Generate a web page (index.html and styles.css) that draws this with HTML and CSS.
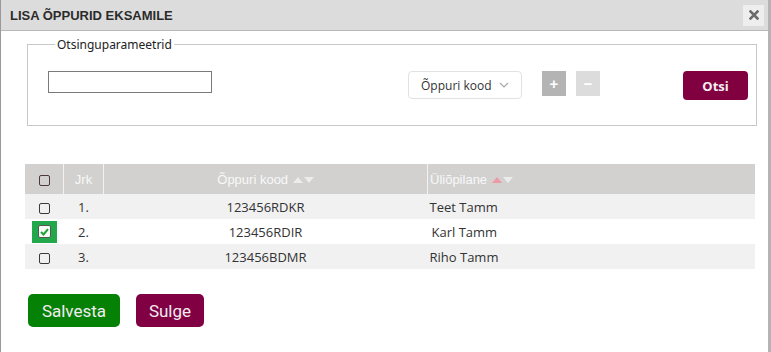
FILE: index.html
```html
<!DOCTYPE html>
<html lang="et">
<head>
    <meta charset="utf-8">
    <title>Lisa õppurid eksamile</title>
    <link rel="stylesheet" href="styles.css">
</head>
<body>
    <div class="dialog" role="dialog" aria-labelledby="dialogTitle">
        <div class="titlebar">
            <h1 id="dialogTitle" class="title">LISA ÕPPURID EKSAMILE</h1>
            <button class="close-btn" aria-label="Sulge">
                <svg width="10" height="10" viewBox="0 0 10 10" aria-hidden="true">
                    <path d="M1.5 1.5 L8.5 8.5 M8.5 1.5 L1.5 8.5" stroke="#6b6b6b" stroke-width="2.6" stroke-linecap="square"/>
                </svg>
            </button>
        </div>

        <div class="content">
            <fieldset class="search">
                <legend>Otsinguparameetrid</legend>
                <div class="search-row">
                    <input type="text" class="search-input" aria-label="Otsingu väärtus">
                    <div class="select-box">
                        <span>Õppuri kood</span>
                        <svg width="10" height="6" viewBox="0 0 10 6" aria-hidden="true">
                            <path d="M1 1 L5 5 L9 1" fill="none" stroke="#a8a8a8" stroke-width="1.2"/>
                        </svg>
                    </div>
                    <button class="param-btn param-add" aria-label="Lisa parameeter">+</button>
                    <button class="param-btn param-remove" aria-label="Eemalda parameeter">&minus;</button>
                    <button class="btn-search">Otsi</button>
                </div>
            </fieldset>

            <table class="grid">
                <thead>
                    <tr>
                        <th class="col-check"><span class="checkbox"></span></th>
                        <th class="col-nr">Jrk</th>
                        <th class="col-code">Õppuri kood <span class="sort"><i class="up"></i><i class="down"></i></span></th>
                        <th class="col-name">Üliõpilane <span class="sort"><i class="up active"></i><i class="down"></i></span></th>
                    </tr>
                </thead>
                <tbody>
                    <tr>
                        <td class="col-check"><span class="checkbox"></span></td>
                        <td class="col-nr">1.</td>
                        <td class="col-code">123456RDKR</td>
                        <td class="col-name">Teet Tamm</td>
                    </tr>
                    <tr>
                        <td class="col-check"><span class="check-wrap"><span class="checkbox checked">
                            <svg width="9" height="8" viewBox="0 0 9 8" aria-hidden="true">
                                <path d="M1 4 L3.5 6.5 L8 1.2" fill="none" stroke="#1f9e3a" stroke-width="2"/>
                            </svg>
                        </span></span></td>
                        <td class="col-nr">2.</td>
                        <td class="col-code">123456RDIR</td>
                        <td class="col-name name-shift">Karl Tamm</td>
                    </tr>
                    <tr>
                        <td class="col-check"><span class="checkbox"></span></td>
                        <td class="col-nr">3.</td>
                        <td class="col-code">123456BDMR</td>
                        <td class="col-name">Riho Tamm</td>
                    </tr>
                </tbody>
            </table>

            <div class="actions">
                <button class="btn-save">Salvesta</button>
                <button class="btn-close">Sulge</button>
            </div>
        </div>
    </div>
</body>
</html>
```

FILE: styles.css
```css
body {
    margin: 0;
    padding: 0;
    width: 771px;
    height: 352px;
    overflow: hidden;
    background: #fff;
    font-family: "Open Sans", "Noto Sans", sans-serif;
    color: #333;
}
.dialog {
    height: 352px;
    border-left: 1px solid #9a9a9a;
    border-right: 3px solid #b4b4b4;
    box-sizing: border-box;
}
.titlebar {
    display: flex;
    align-items: center;
    justify-content: space-between;
    height: 30px;
    padding: 0 4px 0 9px;
    background: #dcdcdc;
    border-bottom: 1px solid #b9b9b9;
}
.title {
    margin: 0;
    font-family: "Liberation Sans", Arial, sans-serif;
    font-size: 13px;
    font-weight: bold;
    color: #2b2b2b;
}
.close-btn {
    width: 21px;
    height: 21px;
    padding: 0;
    border: none;
    background: #eeeeee;
    display: flex;
    align-items: center;
    justify-content: center;
    cursor: pointer;
}
.content {
    padding: 0 11px 0 24px;
}
.search {
    margin: 5px 0 0 2px;
    padding: 18px 8px 25px 20px;
    border: 1px solid #c8c8c8;
}
.search legend {
    padding: 0 2px;
    margin-left: 7px;
    font-family: "Noto Sans", sans-serif;
    font-size: 12px;
    color: #222;
}
.search-row {
    display: flex;
    align-items: flex-start;
}
.search-input {
    width: 164px;
    height: 22px;
    box-sizing: border-box;
    margin: 0;
    border: 1px solid #7a7a7a;
    border-radius: 0;
    padding: 0 4px;
}
.select-box {
    display: flex;
    align-items: center;
    justify-content: space-between;
    width: 114px;
    height: 28px;
    box-sizing: border-box;
    margin-left: 196px;
    padding: 0 12px 0 12px;
    border: 1px solid #e2e2e2;
    border-radius: 4px;
    font-size: 12px;
    white-space: nowrap;
    color: #333;
}
.param-btn {
    width: 24px;
    height: 25px;
    padding: 0;
    border: none;
    color: #fff;
    font-size: 15px;
    font-weight: bold;
    line-height: 25px;
    font-family: "Liberation Sans", Arial, sans-serif;
}
.param-add {
    margin-left: 20px;
    background: #b4b4b4;
}
.param-remove {
    margin-left: 10px;
    background: #dcdcdc;
}
.btn-search {
    margin-left: auto;
    width: 65px;
    height: 29px;
    border: none;
    border-radius: 4px;
    background: #800040;
    color: #f7eef2;
    font-family: "Open Sans", sans-serif;
    font-size: 13px;
    font-weight: bold;
}
.grid {
    width: 730px;
    margin-top: 38px;
    border-collapse: collapse;
    font-size: 13px;
}
.grid th {
    height: 30px;
    padding: 0;
    background: #d2d1d0;
    color: #f8f8f8;
    font-family: "Liberation Sans", Arial, sans-serif;
    font-size: 13px;
    font-weight: normal;
    border-left: 1px solid #f2f2f2;
}
.grid th:first-child {
    border-left: none;
}
.grid td {
    height: 25px;
    padding: 0;
    color: #333;
}
.grid tbody tr:nth-child(odd) td {
    background: #f1f1f1;
}
.col-check {
    width: 38px;
    text-align: center;
}
.col-nr {
    width: 39px;
    text-align: center;
}
.col-code {
    width: 323px;
    text-align: center;
}
.grid th.col-name,
.grid td.col-name {
    text-align: left;
    padding-left: 2px;
}
.grid td.name-shift {
    padding-left: 4px;
}
.checkbox {
    display: inline-flex;
    align-items: center;
    justify-content: center;
    width: 9px;
    height: 9px;
    border: 1.5px solid #3a3a3a;
    border-radius: 2px;
    vertical-align: middle;
}
.grid th .checkbox {
    border-color: #4a3a3a;
}
.check-wrap {
    display: inline-flex;
    align-items: center;
    justify-content: center;
    width: 25px;
    height: 22px;
    background: #22a84a;
    vertical-align: middle;
}
.checkbox.checked {
    width: 11px;
    height: 11px;
    background: #f4fbf5;
    border: 1px solid #555;
}
.sort {
    display: inline-flex;
    gap: 1px;
    vertical-align: middle;
    margin-left: 1px;
}
.sort i {
    width: 0;
    height: 0;
    border-left: 5px solid transparent;
    border-right: 5px solid transparent;
}
.sort .up {
    border-bottom: 6px solid #ececec;
}
.sort .down {
    border-top: 6px solid #ececec;
}
.sort .up.active {
    border-bottom-color: #ee9aa4;
}
.actions {
    display: flex;
    gap: 16px;
    margin: 25px 0 0 3px;
}
.btn-save,
.btn-close {
    height: 33px;
    border: none;
    border-radius: 5px;
    font-family: Roboto, sans-serif;
    font-size: 17px;
    color: #f2ecf0;
    padding: 0 12px;
}
.btn-save {
    width: 92px;
    background: #058205;
}
.btn-close {
    width: 68px;
    background: #800043;
}
```
